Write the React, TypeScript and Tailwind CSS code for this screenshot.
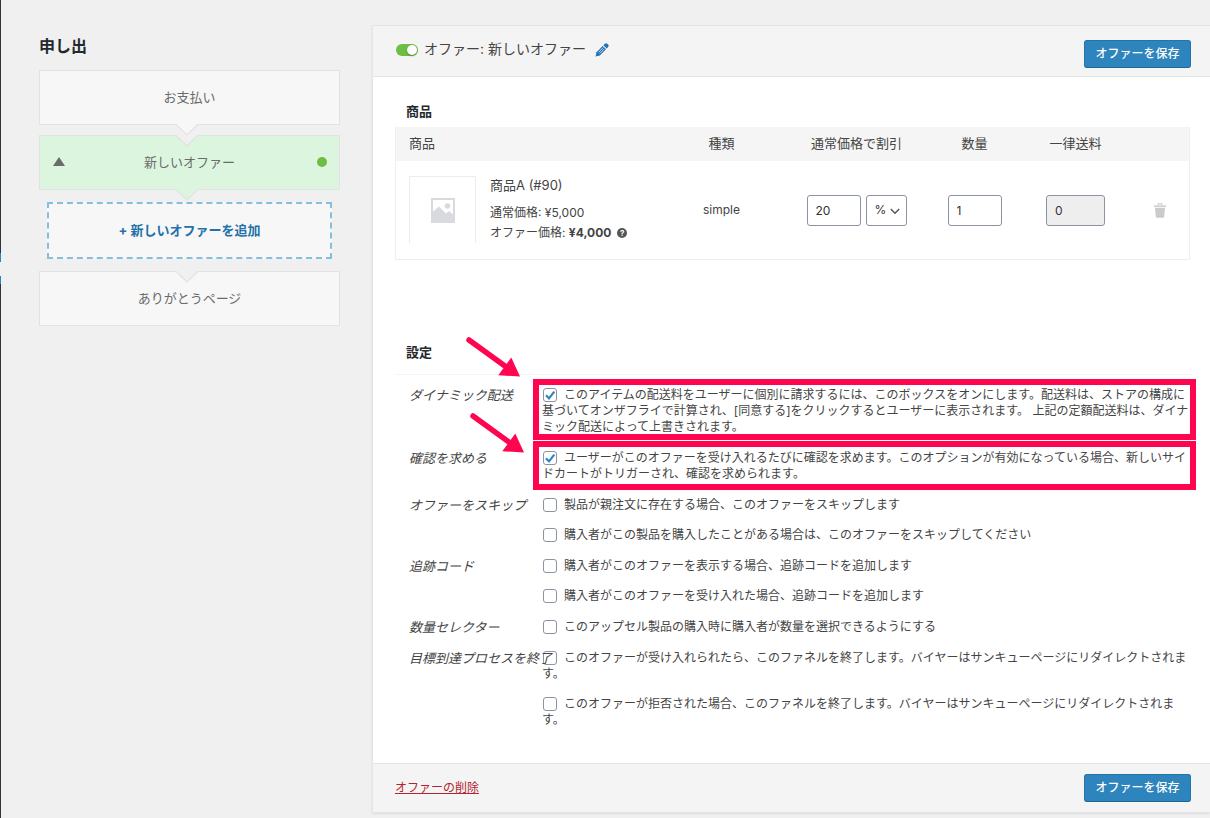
import { useState, type ReactNode } from "react";
import clsx from "clsx";

/* ---------- icons ---------- */

function PencilIcon() {
  return (
    <svg width="14" height="14" viewBox="0 0 14 14" aria-hidden="true">
      <path d="M8.4 2.2 9.900.8c.7-.7 1.700-.7 2.400 0l.8.8c.7.7.7 1.700 0 2.400l-1.400 1.500z" fill="#2271b1" />
      <path d="M7.700 2.900 11 6.200 4.800 12.500.6 13.400 1.500 9.200z" fill="#2271b1" />
      <path d="M8.100 4.700 3.500 9.300M9.300 5.900 4.700 10.500" stroke="#f4f4f4" strokeWidth="0.8" fill="none" />
    </svg>
  );
}

function TrashIcon() {
  return (
    <svg width="12" height="15" viewBox="0 0 12 15" aria-hidden="true">
      <path d="M0 2.4h12v1.4H0z" fill="#c9c9c9" />
      <path d="M3.6 2.4V1.2c0-.6.3-.9.9-.9h3c.6 0 .9.3.9.9v1.2h-1V1.3H4.6v1.1z" fill="#c9c9c9" />
      <path d="M1 4.8h10l-.8 9c0 .6-.4.9-1 .9H2.8c-.6 0-1-.3-1-.9z" fill="#cbcbcb" />
    </svg>
  );
}

function ImagePlaceholder() {
  return (
    <svg width="24" height="25" viewBox="0 0 24 25" aria-hidden="true">
      <rect x="1" y="1" width="22" height="23" fill="#fff" stroke="#d8dadd" strokeWidth="2" />
      <circle cx="16.5" cy="8" r="2.800" fill="#d8dadd" />
      <path d="M1 14.5 8 8.5l7 7 3-2.500 5 4.500V24H1z" fill="#d8dadd" />
    </svg>
  );
}

function Triangle() {
  return (
    <svg width="12" height="9" viewBox="0 0 12 9" aria-hidden="true">
      <path d="M6 0 12 9H0z" fill="#6b6b6b" />
    </svg>
  );
}

function Notch({ className, fill }: { className: string; fill: string }) {
  return (
    <svg
      className={clsx("absolute left-1/2 -ml-[14px]", className)}
      width="22"
      height="12"
      viewBox="0 0 22 12"
      aria-hidden="true"
    >
      <path d="M0 0h22L11 11z" fill={fill} />
      <path d="M0 .5 11 11 22 .5" fill="none" stroke="#e4e1e1" strokeWidth="1.2" />
    </svg>
  );
}

function PointerArrow({ className }: { className: string }) {
  return (
    <svg
      className={clsx("pointer-events-none absolute", className)}
      width="60"
      height="46"
      viewBox="0 0 60 46"
      aria-hidden="true"
    >
      <path d="M6 6 44 33.5" stroke="#ff0550" strokeWidth="5.5" strokeLinecap="round" />
      <path d="M57 42.5 48.3 23.5 35.3 41.3z" fill="#ff0550" />
    </svg>
  );
}

/* ---------- sidebar ---------- */

function Step({
  label,
  active,
  notchTop,
  notchBottom,
}: {
  label: string;
  active?: boolean;
  notchTop?: boolean;
  notchBottom?: boolean;
}) {
  return (
    <li
      className={clsx(
        "relative flex h-[55px] items-center justify-center border border-[#e2e2e2] pb-[2px] text-[13px] leading-5 text-[#6b6b6b]",
        active ? "bg-[#dcf5df]" : "bg-[#f7f7f7]",
      )}
    >
      {active && (
        <span className="absolute left-[13px]">
          <Triangle />
        </span>
      )}
      <a href="#step">{label}</a>
      {active && <span className="absolute right-3 size-[10px] rounded-full bg-[#6cbe45]" />}
      {notchTop && <Notch className="-top-px" fill="#f0f0f0" />}
      {notchBottom && <Notch className="top-[53px]" fill={active ? "#dcf5df" : "#f7f7f7"} />}
    </li>
  );
}

function Sidebar() {
  return (
    <aside className="w-[301px] shrink-0 pt-9">
      <h2 className="text-base leading-5 font-bold text-[#23282d]">申し出</h2>
      <ul className="mt-[14px] flex flex-col">
        <Step label="お支払い" notchBottom />
        <li className="h-[10px]" aria-hidden="true" />
        <Step label="新しいオファー" active notchTop notchBottom />
        <li className="px-2 py-3">
          <button className="flex h-[57px] w-full items-center justify-center border-2 border-dashed border-[#85bfdc] bg-[#f7f7f7] text-[13px] font-bold text-[#2271a8]">
            + 新しいオファーを追加
          </button>
        </li>
        <Step label="ありがとうページ" notchTop />
      </ul>
    </aside>
  );
}

/* ---------- controls ---------- */

function SaveButton() {
  return (
    <button className="flex h-7 w-[107px] shrink-0 items-center justify-center rounded-[3px] border border-[#2573a7] border-b-[#1d6596] bg-[#2e84bc] pb-px text-xs font-medium whitespace-nowrap text-white">
      オファーを保存
    </button>
  );
}

function Option({ children, checked }: { children: ReactNode; checked?: boolean }) {
  const [on, setOn] = useState(!!checked);
  return (
    <label className="block">
      <span className="relative mt-px mr-[7px] ml-px inline-block h-[14px] w-[14px] align-top">
        <input
          type="checkbox"
          checked={on}
          onChange={(e) => setOn(e.target.checked)}
          className="block size-[14px] appearance-none rounded-[3px] border border-[#8c94a3] bg-white"
        />
        {on && (
          <svg
            className="pointer-events-none absolute top-0 left-0"
            width="14"
            height="14"
            viewBox="0 0 14 14"
            aria-hidden="true"
          >
            <path d="M3 7.200 6 10.400 11.300 3.600" fill="none" stroke="#2e86c1" strokeWidth="2.200" />
          </svg>
        )}
      </span>
      {children}
    </label>
  );
}

function SettingRow({ label, children }: { label: string; children: ReactNode }) {
  return (
    <div role="group" aria-label={label} className="relative flex">
      <div className="pointer-events-none relative z-10 w-[133px] shrink-0 text-[13px] leading-4 whitespace-nowrap text-[#444] italic">
        {label}
      </div>
      <div className="flex min-w-0 flex-1 flex-col gap-[14px] text-xs leading-4 text-[#444]">{children}</div>
    </div>
  );
}

const field = "h-[31px] rounded-[3px] border border-[#8c94a3] px-2 text-xs text-[#333]";

/* ---------- products ---------- */

function ProductTable() {
  return (
    <table className="mt-[6px] w-full table-fixed border-collapse border border-t-0 border-[#eeeeee] text-[#444]">
      <colgroup>
        <col />
        <col className="w-[124px]" />
        <col className="w-[146px]" />
        <col className="w-[90px]" />
        <col className="w-[112px]" />
        <col className="w-[58px]" />
      </colgroup>
      <thead>
        <tr className="h-[34px] bg-[#f5f5f5] text-[13px]">
          <th className="pl-[13px] text-left font-normal">商品</th>
          <th className="font-normal">種類</th>
          <th className="font-normal">通常価格で割引</th>
          <th className="font-normal">数量</th>
          <th className="font-normal">一律送料</th>
          <td />
        </tr>
      </thead>
      <tbody>
        <tr className="text-center text-xs">
          <td className="pt-[15px] pb-4 pl-[13px] text-left">
            <div className="flex gap-[14px]">
              <div className="flex h-[67px] w-[67px] shrink-0 items-center justify-center border border-b-0 border-[#ececec]">
                <ImagePlaceholder />
              </div>
              <div>
                <div className="text-[13px] leading-[18px]">商品A (#90)</div>
                <div className="mt-[9px] leading-5">通常価格: ¥5,000</div>
                <div className="flex items-center gap-[6px] leading-5">
                  <span>
                    オファー価格: <b className="font-bold">¥4,000</b>
                  </span>
                  <span className="flex size-[10px] items-center justify-center rounded-full bg-[#555] text-[8px] leading-none font-bold text-white">
                    ?
                  </span>
                </div>
              </div>
            </div>
          </td>
          <td>simple</td>
          <td>
            <div className="flex justify-center gap-[5px]">
              <input aria-label="割引" defaultValue="20" className={clsx(field, "w-[54px] bg-white")} />
              <div className="relative">
                <select aria-label="割引の種類" className={clsx(field, "w-[41px] appearance-none bg-white")}>
                  <option>%</option>
                  <option>¥</option>
                </select>
                <svg
                  className="pointer-events-none absolute top-[13px] right-[7px]"
                  width="10"
                  height="7"
                  viewBox="0 0 10 7"
                  aria-hidden="true"
                >
                  <path d="M.8 1 5 5.200 9.200 1" fill="none" stroke="#555" strokeWidth="1.500" />
                </svg>
              </div>
            </div>
          </td>
          <td>
            <input aria-label="数量" defaultValue="1" className={clsx(field, "w-[54px] bg-white")} />
          </td>
          <td>
            <input aria-label="一律送料" defaultValue="0" readOnly className={clsx(field, "w-[59px] bg-[#eeeeee]")} />
          </td>
          <td>
            <button aria-label="削除" className="inline-block align-middle">
              <TrashIcon />
            </button>
          </td>
        </tr>
      </tbody>
    </table>
  );
}

/* ---------- settings ---------- */

function Settings() {
  return (
    <section className="mt-[82px]">
      <h3 className="pl-[11px] text-[13px] leading-5 font-bold text-[#23282d]">設定</h3>
      <div className="-mr-[2px] mt-3 flex flex-col gap-[15px] border-t border-[#f4f4f4] pt-3 pl-[14px]">
        <SettingRow label="ダイナミック配送">
          <Option checked>
            このアイテムの配送料をユーザーに個別に請求するには、このボックスをオンにします。配送料は、ストアの構成に基づいてオンザフライで計算され、[同意する]をクリックするとユーザーに表示されます。
            上記の定額配送料は、ダイナミック配送によって上書きされます。
          </Option>
          <div className="pointer-events-none absolute -top-2 -right-1 -bottom-[5px] left-[124px] border-6 border-[#ff0550]" />
          <PointerArrow className="-top-[53px] left-[54px]" />
        </SettingRow>
        <SettingRow label="確認を求める">
          <Option checked>
            ユーザーがこのオファーを受け入れるたびに確認を求めます。このオプションが有効になっている場合、新しいサイドカートがトリガーされ、確認を求められます。
          </Option>
          <div className="pointer-events-none absolute -top-[9px] -right-1 -bottom-2 left-[124px] border-6 border-[#ff0550]" />
          <PointerArrow className="-top-10 left-[58px]" />
        </SettingRow>
        <SettingRow label="オファーをスキップ">
          <Option>製品が親注文に存在する場合、このオファーをスキップします</Option>
          <Option>購入者がこの製品を購入したことがある場合は、このオファーをスキップしてください</Option>
        </SettingRow>
        <SettingRow label="追跡コード">
          <Option>購入者がこのオファーを表示する場合、追跡コードを追加します</Option>
          <Option>購入者がこのオファーを受け入れた場合、追跡コードを追加します</Option>
        </SettingRow>
        <SettingRow label="数量セレクター">
          <Option>このアップセル製品の購入時に購入者が数量を選択できるようにする</Option>
        </SettingRow>
        <SettingRow label="目標到達プロセスを終了">
          <Option>
            このオファーが受け入れられたら、このファネルを終了します。バイヤーはサンキューページにリダイレクトされます。
          </Option>
          <Option>
            このオファーが拒否された場合、このファネルを終了します。バイヤーはサンキューページにリダイレクトされます。
          </Option>
        </SettingRow>
      </div>
    </section>
  );
}

/* ---------- page ---------- */

export default function App() {
  return (
    <div
      lang="ja"
      className="flex min-h-screen bg-[#f0f0f0] font-['Inter','Noto_Sans_CJK_JP',sans-serif] text-[13px] text-[#444]"
    >
      <div className="flex w-px shrink-0 flex-col bg-[#2f333d]" aria-hidden="true">
        <div className="mt-[253px] h-[9px] bg-[#2a86c1]" />
        <div className="h-[14px] bg-[#f0f0f0]" />
        <div className="h-2 bg-[#2a86c1]" />
      </div>
      <div className="flex min-w-0 flex-1 items-start gap-8 pl-[38px]">
        <Sidebar />
        <main className="mt-[25px] min-w-0 flex-1 border-y border-l border-[#e4e4e4] bg-white shadow-[0_1px_2px_rgba(0,0,0,0.08)]">
          <header className="flex items-start justify-between border-b border-[#e4e4e4] bg-[#f4f4f4] pt-[14px] pr-[19px] pb-2 pl-[23px]">
            <div className="flex h-5 items-center">
              <button
                role="switch"
                aria-checked="true"
                aria-label="オファーを有効にする"
                className="flex h-3 w-[22px] items-center justify-end rounded-full bg-[#6cbe45] pr-px"
              >
                <span className="size-[10px] rounded-full bg-white shadow-[0_1px_2px_rgba(0,0,0,0.3)]" />
              </button>
              <h1 className="ml-[6px] pb-[2px] text-sm leading-5 text-[#444]">オファー: 新しいオファー</h1>
              <button aria-label="編集" className="ml-[9px]">
                <PencilIcon />
              </button>
            </div>
            <SaveButton />
          </header>
          <div className="pt-6 pr-5 pb-[35px] pl-[22px]">
            <h3 className="pl-[11px] text-[13px] leading-5 font-bold text-[#23282d]">商品</h3>
            <ProductTable />
            <Settings />
          </div>
          <footer className="flex items-center justify-between border-t border-[#e4e4e4] bg-[#f4f4f4] py-[10px] pr-[19px] pl-[22px]">
            <a href="#delete" className="text-xs text-[#b32430] underline">
              オファーの削除
            </a>
            <SaveButton />
          </footer>
        </main>
      </div>
    </div>
  );
}
